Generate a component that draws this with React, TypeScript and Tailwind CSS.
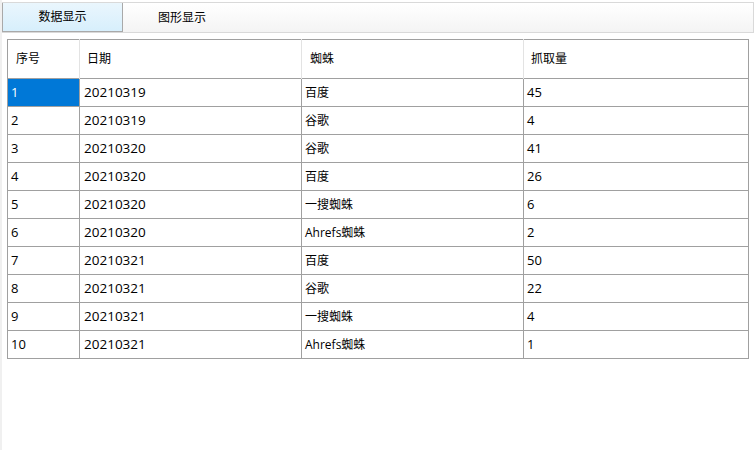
import React from "react";

type Row = { id: number; date: string; spider: string; count: number };

const rows: Row[] = [
  { id: 1, date: "20210319", spider: "百度", count: 45 },
  { id: 2, date: "20210319", spider: "谷歌", count: 4 },
  { id: 3, date: "20210320", spider: "谷歌", count: 41 },
  { id: 4, date: "20210320", spider: "百度", count: 26 },
  { id: 5, date: "20210320", spider: "一搜蜘蛛", count: 6 },
  { id: 6, date: "20210320", spider: "Ahrefs蜘蛛", count: 2 },
  { id: 7, date: "20210321", spider: "百度", count: 50 },
  { id: 8, date: "20210321", spider: "谷歌", count: 22 },
  { id: 9, date: "20210321", spider: "一搜蜘蛛", count: 4 },
  { id: 10, date: "20210321", spider: "Ahrefs蜘蛛", count: 1 },
];

const font = "font-['Segoe_UI','Open_Sans','Noto_Sans_CJK_SC',sans-serif]";

export default function App() {
  return (
    <div className={`flex h-[450px] w-[754px] bg-white text-[12px] text-black ${font}`}>
      {/* left frame edge */}
      <div className="w-[2px] bg-[#f0f0f0]" />

      <div className="flex flex-1 flex-col">
        {/* Tabs */}
        <div className="mt-[2px] flex h-[31px] border-t border-r border-b border-[#d9d9d9] bg-gradient-to-b from-white to-[#f4f4f4]">
          <div className="flex w-[121px] items-center justify-center border border-t-0 border-[#a9a9a9] bg-gradient-to-b from-[#eaf6fd] to-[#d7effc]">
            数据显示
          </div>
          <div className="flex w-[118px] items-center justify-center">图形显示</div>
        </div>

        {/* Grid */}
        <div className="pl-[5px] pt-[6px]">
          <table className="w-[741px] table-fixed border-collapse border border-[#a0a0a0]">
            <colgroup>
              <col className="w-[72px]" />
              <col className="w-[222px]" />
              <col className="w-[222px]" />
              <col className="w-[225px]" />
            </colgroup>
            <thead>
              <tr className="h-[39px] border-b border-[#a0a0a0]">
                <th className="border-r border-[#e3e3e3] pl-[8px] text-left font-normal">序号</th>
                <th className="border-r border-[#e3e3e3] pl-[7px] text-left font-normal">日期</th>
                <th className="border-r border-[#e3e3e3] pl-[8px] text-left font-normal">蜘蛛</th>
                <th className="pl-[7px] text-left font-normal">抓取量</th>
              </tr>
            </thead>
            <tbody>
              {rows.map((r) => (
                <tr key={r.id} className="h-[28px] border-b border-[#a0a0a0]">
                  <td
                    className={`border-r border-[#a0a0a0] pl-[3px] text-[13px] ${
                      r.id === 1 ? "bg-[#0078d7] text-white" : ""
                    }`}
                  >
                    {r.id}
                  </td>
                  <td className="border-r border-[#a0a0a0] pl-[4px] text-[13.5px]">{r.date}</td>
                  <td className="border-r border-[#a0a0a0] pl-[3px]">{r.spider}</td>
                  <td className="pl-[3px] text-[13px]">{r.count}</td>
                </tr>
              ))}
            </tbody>
          </table>
        </div>
      </div>
    </div>
  );
}
